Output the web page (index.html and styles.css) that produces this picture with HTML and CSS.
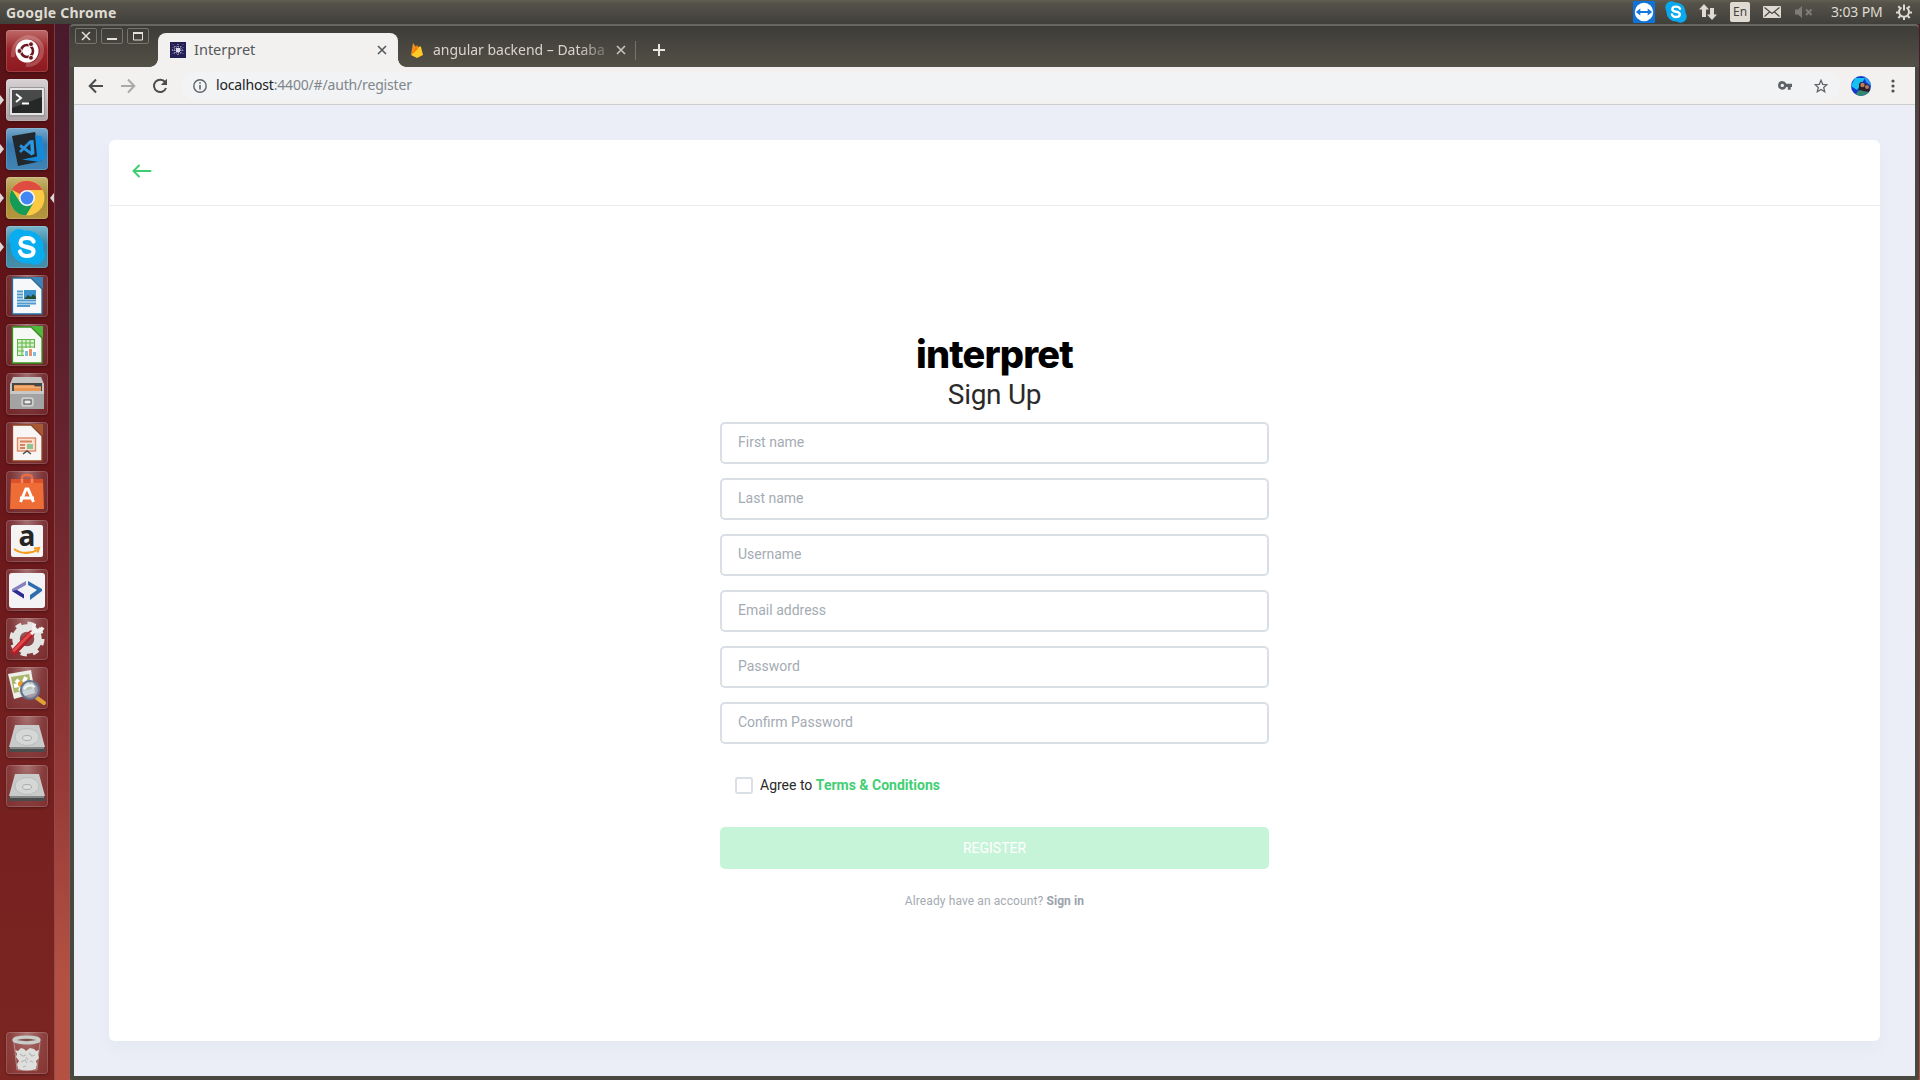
FILE: index.html
```html
<!DOCTYPE html>
<html lang="en">
<head>
<meta charset="utf-8">
<title>Interpret</title>
<link rel="stylesheet" href="styles.css">
</head>
<body>
<header class="panel">
  <span class="panel-title">Google Chrome</span>
  <div class="tray">
    <svg class="tray-tv" width="22" height="22" viewBox="0 0 22 22"><rect width="22" height="22" fill="#0f72d8"/><circle cx="11" cy="11" r="9.2" fill="#fff"/><path d="M2.800 11l4.500-3.500v2.500h7.400V7.500l4.500 3.500-4.500 3.500V12H7.300v2.500z" fill="#1478dc"/></svg>
    <svg class="tray-skype" width="22" height="22" viewBox="0 0 22 22"><circle cx="6.5" cy="6.5" r="6.2" fill="#08a9ee"/><circle cx="15.5" cy="15.5" r="6.2" fill="#08a9ee"/><circle cx="11" cy="11" r="9.5" fill="#08a9ee"/><path d="M15 7.800C14.300 6 12.700 5.600 11 5.600c-2 0-3.700.9-3.700 2.600 0 3.500 7.500 1.700 7.500 5 0 1.900-1.800 2.800-3.800 2.800-1.900 0-3.500-.8-4-2.500" fill="none" stroke="#fff" stroke-width="2.400" stroke-linecap="round"/></svg>
    <svg class="tray-net" width="18" height="18" viewBox="0 0 18 18" fill="#dfdbd2"><path d="M5 1l5 5.500H7V14H3V6.500H0zM13 17l-5-5.500h3V5h4v6.500h3z"/></svg>
    <span class="tray-lang">En</span>
    <svg class="tray-mail" width="18" height="12" viewBox="0 0 18 12"><rect width="18" height="12" rx="1" fill="#dfdbd2"/><path d="M1.500 1.500L9 7.500l7.500-6M1.500 10.500l5-4.500M16.500 10.500l-5-4.500" fill="none" stroke="#4a4842" stroke-width="1.200"/></svg>
    <svg class="tray-vol" width="18" height="12" viewBox="0 0 18 12"><path d="M0 3.500h3L7 0v12L3 8.500H0z" fill="#7f7c75"/><path d="M11 3.500l5.500 5.500M16.500 3.500L11 9" stroke="#7f7c75" stroke-width="2"/></svg>
    <span class="tray-clock">3:03 PM</span>
    <svg class="tray-gear" width="16" height="16" viewBox="0 0 16 16" fill="none" stroke="#dfdbd2"><path d="M10.500 3.500a5 5 0 1 1-5 0" stroke-width="2"/><path d="M8 .5v6" stroke-width="2"/><path d="M4 4L2.300 2.300M12 4l1.700-1.700M3 8.500H0M13 8.500h3M4.300 12l-2 2M11.700 12l2 2M8 13v3" stroke-width="2"/></svg>
  </div>
</header>
<div class="workspace">
  <nav class="launcher">
    <div class="tile ubuntu"><svg viewBox="0 0 42 42"><path d="M7 27C6 14 16 5 27 8c9 3 12 14 5 22M35 14c4 12-4 22-15 21" fill="none" stroke="#ffffff35" stroke-width="4"/><circle cx="21" cy="21" r="11.500" fill="#fff"/><circle cx="21" cy="21" r="6" fill="none" stroke="#6c1720" stroke-width="2.600"/><path d="M22 19l4-6.500M22 23l4 6.500M12 21h6" stroke="#fff" stroke-width="1.200"/><g fill="#6c1720" stroke="#fff" stroke-width=".8"><circle cx="13.500" cy="21" r="2.400"/><circle cx="25" cy="14.200" r="2.400"/><circle cx="25" cy="27.800" r="2.400"/></g></svg></div>
    <div class="tile terminal running"><svg viewBox="0 0 42 42"><rect x="3" y="8" width="36" height="30" rx="2" fill="#9a9898"/><rect x="4" y="9" width="34" height="27" rx="1" fill="#e4e2e2"/><rect x="6" y="11" width="30" height="23" fill="#252827"/><path d="M6 11h30v7L6 29z" fill="#474a49"/><path d="M10 15l5 4-5 4M16 24.500h7" fill="none" stroke="#fff" stroke-width="1.900"/></svg></div>
    <div class="tile vscode running"><svg viewBox="0 0 42 42"><path d="M6 8l23-4 7 29-24 5z" fill="#22272c"/><path d="M29 7l7 1.500 3 21.500-5 4-18-2.500 15-3z" fill="#168ad8"/><path d="M14 17.500L26 26M14 24l11-11" fill="none" stroke="#2a92dc" stroke-width="2.800"/><path d="M24 12.500l3.500-.5 1 14-3.500 1.500z" fill="#2e9ae4"/></svg></div>
    <div class="tile chrome running active"><svg viewBox="0 0 42 42"><circle cx="21" cy="21" r="17.500" fill="#fbca42"/><path d="M21 21L5.800 12.500A17.500 17.500 0 0 1 36.500 13H21z" fill="#df4c42"/><path d="M5.800 12.500L14 25l7 4-6 8.500A17.500 17.500 0 0 1 5.800 12.500z" fill="#149b57"/><path d="M21 29l7-4-8 13.500-5.500-1z" fill="#149b57"/><circle cx="21" cy="21" r="8" fill="#f5f5f5"/><circle cx="21" cy="21" r="6.400" fill="#4285f4"/></svg></div>
    <div class="tile skype running"><svg viewBox="0 0 42 42"><circle cx="13" cy="13" r="10" fill="#09adef"/><circle cx="29" cy="29" r="10" fill="#09adef"/><circle cx="21" cy="21" r="16.500" fill="#09adef"/><path d="M27.500 15.500C26.500 12.600 23.500 12 21 12c-3.500 0-6.500 1.500-6.500 4.400 0 6.500 13 3 13 9 0 3.200-3.200 4.600-6.500 4.600s-6-1.200-7-4.500" fill="none" stroke="#fff" stroke-width="4.200" stroke-linecap="round"/></svg></div>
    <div class="tile"><svg viewBox="0 0 42 42"><path d="M6.500 3H25l11 11v25H6.500z" fill="#f6f8f9" stroke="#246f9f" stroke-width="1.300"/><path d="M25 2h12v12z" fill="#3c83b7"/><path d="M11 16.500h6M11 19.500h6M11 22.500h6M11 25.500h19M11 28.500h19M11 31h13" stroke="#4f9bd0" stroke-width="1.800"/><rect x="18" y="15" width="12" height="9" fill="#3a93cc"/><path d="M18 24l4-4 3 2 2-3 3 3v2z" fill="#294d32"/></svg></div>
    <div class="tile"><svg viewBox="0 0 42 42"><path d="M6.500 3H25l11 11v25H6.500z" fill="#f6f8f6" stroke="#33951d" stroke-width="1.300"/><path d="M25 2h12v12z" fill="#50b83a"/><rect x="11.500" y="15.500" width="17" height="16" fill="#d8f1cb" stroke="#5fb646"/><path d="M12 19h17M12 23h17M12 27h17M16 16v15M20 16v15M24 16v15" stroke="#5fb646"/><rect x="18" y="24" width="13" height="8" fill="#fff"/><path d="M20.500 27v5M28.500 28v4" stroke="#7cbfe2" stroke-width="3"/><path d="M24.500 25v7" stroke="#ee9063" stroke-width="3"/></svg></div>
    <div class="tile"><svg viewBox="0 0 42 42"><path d="M7 4h28l3 7v25H4V11z" fill="#c4c4c2"/><path d="M6 10h30v9H6z" fill="#494846"/><path d="M8 12h20l1 2h6v5H8z" fill="#eb9652"/><path d="M8 14h27" stroke="#ffc58c"/><path d="M4 18h34v18H4z" fill="#a2a3a2"/><path d="M4 18h34v3H4z" fill="#c8c8c8"/><rect x="16" y="25" width="11" height="8" rx="1" fill="#bbb" stroke="#dedede"/><rect x="18" y="27" width="7" height="4" fill="#eee" stroke="#555"/></svg></div>
    <div class="tile"><svg viewBox="0 0 42 42"><path d="M6.500 3H25l11 11v25H6.500z" fill="#f8f6f5" stroke="#8e421f" stroke-width="1.300"/><path d="M25 2h12v12z" fill="#a75931"/><rect x="11.500" y="16" width="18" height="13" fill="#fae1d4" stroke="#e08a66" stroke-width="1.400"/><path d="M14 19.500h12M14 23h5M14 26h5" stroke="#cf8560" stroke-width="1.800"/><path d="M21 27v-5h6v5z" fill="#8cc592"/><path d="M17 32l4-3 4 3" fill="none" stroke="#4d4d4d" stroke-width="1.500"/></svg></div>
    <div class="tile"><svg viewBox="0 0 42 42"><path d="M16 12V7q0-3 5-3t5 3v5" fill="none" stroke="#ed6a43" stroke-width="2.500"/><path d="M5 8h32l1 30H4z" fill="#ee6c35"/><path d="M5 8h32v4H5z" fill="#dd512a"/><path d="M16 12V8M26 12V8" stroke="#f28a66" stroke-width="2.500"/><path d="M14.500 31L20 18h2l5.500 13M14 27h14" fill="none" stroke="#fff" stroke-width="3"/></svg></div>
    <div class="tile"><svg viewBox="0 0 42 42"><rect x="5" y="5" width="32" height="32" rx="2" fill="#f4f4f4"/><text x="21" y="26" text-anchor="middle" class="amazon-a">a</text><path d="M8 29c7 5 17 5 23 1M28 28.500l5-.5-1.500 4.500" fill="none" stroke="#f59b1c" stroke-width="2.100"/></svg></div>
    <div class="tile"><svg viewBox="0 0 42 42"><rect x="3" y="4" width="36" height="35" rx="3" fill="#f3f3f5"/><path d="M20 12v4l-9 5 7 4.500v4L6 22v-2z" fill="#8782bd"/><path d="M18 25.500v4L6 22l5-1z" fill="#2c2c94"/><path d="M22 12v4l9 5-7 5v5l12-9v-2z" fill="#2f6cad"/></svg></div>
    <div class="tile"><svg viewBox="0 0 42 42"><circle cx="21" cy="21" r="11" fill="none" stroke="#e4e4e3" stroke-width="7.500"/><circle cx="21" cy="21" r="15.500" fill="none" stroke="#e4e4e3" stroke-width="4" stroke-dasharray="6.090 6.090"/><path d="M8.500 33.500L25 16" stroke="#af202a" stroke-width="6.500" stroke-linecap="round"/><path d="M8 32.500L24 16" stroke="#e2494b" stroke-width="3" stroke-linecap="round"/><path d="M25 16l5-4M28.500 5.500q-2 7 2 7.500t6.500-3.500" fill="none" stroke="#f1f1ef" stroke-width="3.500"/></svg></div>
    <div class="tile"><svg viewBox="0 0 42 42"><path d="M2 7l23-4 4 23-21 6z" fill="#eeeeea"/><path d="M5 10l18-3 3 15-18 4z" fill="#a9b66b"/><path d="M10 13l10 9M20 10l-6 14M8 19l15-3" stroke="#fff" stroke-width="4"/><circle cx="15" cy="17" r="3" fill="#e99b20"/><path d="M31 31l7 5" stroke="#dfa036" stroke-width="4" stroke-linecap="round"/><circle cx="24" cy="23" r="9" fill="#b9c9d4aa" stroke="#64718f" stroke-width="2.200"/><path d="M18 22q5-6 11-2" stroke="#eef4f7" stroke-width="2" fill="none"/></svg></div>
    <div class="tile"><svg viewBox="0 0 42 42"><path d="M9 9h24l6 22H3z" fill="#c9caca"/><path d="M3 31h36v5H3z" fill="#4a4b4c"/><path d="M4 31h34v2H4z" fill="#858686"/><ellipse cx="21" cy="21" rx="12" ry="8.500" fill="#d5d6d6" stroke="#bbbcbc"/><ellipse cx="21" cy="22" rx="4.500" ry="2.500" fill="#dedede" stroke="#aaa"/></svg></div>
    <div class="tile"><svg viewBox="0 0 42 42"><path d="M9 9h24l6 22H3z" fill="#c9caca"/><path d="M3 31h36v5H3z" fill="#4a4b4c"/><path d="M4 31h34v2H4z" fill="#858686"/><ellipse cx="21" cy="21" rx="12" ry="8.500" fill="#d5d6d6" stroke="#bbbcbc"/><ellipse cx="21" cy="22" rx="4.500" ry="2.500" fill="#dedede" stroke="#aaa"/></svg></div>
    <div class="tile trash"><svg viewBox="0 0 42 42"><path d="M8 10l3 28h20l3-28z" fill="#a9656440" stroke="#c9a5a3" stroke-width=".7"/><path d="M9 18l3 1 3-3 3 1 2 2 4-3 4 1 2 2 3-1-1 5 1 3-3 3 1 3-1 5q-9 3-18 0l-1-5 2-3-3-4 1-3z" fill="#dededc"/><path d="M14 22l3 2 3-1M23 21l3 3 3-1M15 30l4-2 2 3M24 29l3 1M20 25l2 3M17 35l3-1" fill="none" stroke="#b9bab8" stroke-width="1.200"/><ellipse cx="20.500" cy="8" rx="12.500" ry="2.800" fill="#7f514d" stroke="#c9ccc9" stroke-width="3.300"/></svg></div>
  </nav>
  <main class="window">
    <div class="tabstrip">
      <div class="winbtns">
        <span class="winbtn"><svg width="20" height="14" viewBox="0 0 20 14"><path d="M6 3l8 8M14 3l-8 8" stroke="#e4e1d8" stroke-width="1.500"/></svg></span>
        <span class="winbtn"><svg width="20" height="14" viewBox="0 0 20 14"><path d="M5 10h10" stroke="#e4e1d8" stroke-width="2"/></svg></span>
        <span class="winbtn"><svg width="20" height="14" viewBox="0 0 20 14"><path d="M5.500 4h9v7h-9z" fill="none" stroke="#e4e1d8"/><path d="M5 4h10" stroke="#e4e1d8" stroke-width="2"/></svg></span>
      </div>
      <div class="tab tab-active">
        <svg width="16" height="16" viewBox="0 0 16 16"><rect width="16" height="16" fill="#221f57"/><g stroke="#fff" fill="none"><path d="M8 2v12M2 8h12" stroke-dasharray="1 1" opacity=".8"/><path d="M5 4v8M11 4v8M4 5h8M4 11h8" stroke-dasharray="1 1" opacity=".6"/><path d="M3 2v12M13 2v12" stroke-dasharray="1 2" opacity=".4"/></g><rect x="6" y="6" width="4" height="4" fill="#d8d7ef"/></svg>
        <span class="tab-title">Interpret</span>
        <svg class="tab-close" width="10" height="10" viewBox="0 0 10 10"><path d="M1 1l8 8M9 1L1 9" stroke="#55585b" stroke-width="1.600"/></svg>
      </div>
      <div class="tab tab-back">
        <svg width="14" height="16" viewBox="0 0 14 16"><path d="M1 13L3 1l3 4 1-2 2 3-8 7z" fill="#f4901d"/><path d="M1 13l9-9 1 1 2 8-6 3z" fill="#ffca28"/><path d="M1 13L6 5l2 2z" fill="#f57c00"/></svg>
        <span class="tab-title tab-title-fade">angular backend – Databa</span>
        <svg class="tab-close" width="10" height="10" viewBox="0 0 10 10"><path d="M1 1l8 8M9 1L1 9" stroke="#c7c4bd" stroke-width="1.600"/></svg>
      </div>
      <svg class="newtab" width="12" height="12" viewBox="0 0 12 12"><path d="M6 0v12M0 6h12" stroke="#e8e5dd" stroke-width="2"/></svg>
    </div>
    <div class="toolbar">
      <svg width="16" height="16" viewBox="0 0 16 16" fill="none" stroke="#4c4d4f" stroke-width="2"><path d="M15 8H2.500M8 1.500L1.700 8 8 14.500"/></svg>
      <svg width="16" height="16" viewBox="0 0 16 16" fill="none" stroke="#a9a9a8" stroke-width="2"><path d="M1 8h12.500M8 1.500L14.300 8 8 14.500"/></svg>
      <svg width="16" height="16" viewBox="0 0 16 16"><path d="M13.200 4.200A6.200 6.200 0 1 0 14 10" fill="none" stroke="#4c4d4f" stroke-width="2"/><path d="M15 .8V7H8.800z" fill="#4c4d4f"/></svg>
      <div class="omnibox">
        <svg width="14" height="14" viewBox="0 0 14 14"><circle cx="7" cy="7" r="6.200" fill="none" stroke="#5f6368" stroke-width="1.400"/><path d="M7 6v4.500M7 3.300v1.500" stroke="#5f6368" stroke-width="1.600"/></svg>
        <span class="url"><b>localhost</b>:4400/#/auth/register</span>
        <svg class="key" width="14" height="9" viewBox="0 0 14 9"><path fill-rule="evenodd" d="M4.300 0a4.300 4.300 0 0 1 4 2.800H14v3.200h-1.300v2.800H9.800V6H8.300A4.300 4.300 0 1 1 4.300 0zm0 2.700a1.700 1.700 0 1 0 0 3.400 1.700 1.700 0 0 0 0-3.400z" fill="#5f6368"/></svg>
        <svg class="star" width="14" height="14" viewBox="0 0 14 14"><path d="M7 1.300l1.700 4 4.200.4-3.200 2.800 1 4.200L7 10.500l-3.700 2.200 1-4.200L1.100 5.700l4.200-.4z" fill="none" stroke="#5f6368" stroke-width="1.300"/></svg>
      </div>
      <svg class="avatar" width="20" height="20" viewBox="0 0 20 20"><rect width="20" height="20" fill="#1238c8"/><path d="M0 10l4-8 10 0-3 5-5 7z" fill="#17c0f2"/><path d="M13 0l7 4v6l-5-4z" fill="#2e9bf1"/><path d="M8 17V8q2-4 6 0l4 1 1 7z" fill="#2b1c22"/><circle cx="11.500" cy="9" r="2.200" fill="#bc7c62"/><circle cx="16" cy="11" r="2" fill="#b8765d"/><path d="M4 20q3-8 8-5l6 1v4z" fill="#358575"/></svg>
      <svg class="dots" width="4" height="14" viewBox="0 0 4 14" fill="#505154"><circle cx="2" cy="2" r="1.600"/><circle cx="2" cy="7" r="1.600"/><circle cx="2" cy="12" r="1.600"/></svg>
    </div>
    <div class="page">
      <section class="card">
        <div class="card-head"><svg width="20" height="14" viewBox="0 0 20 14" fill="none" stroke="#3bcf70" stroke-width="2" stroke-linecap="round" stroke-linejoin="round"><path d="M18.500 7H2M7 1.500L1.500 7 7 12.500"/></svg></div>
        <form class="form">
          <div class="logo"><span>interpret</span></div>
          <h1 class="heading">Sign Up</h1>
          <input class="field" type="text" placeholder="First name">
          <input class="field" type="text" placeholder="Last name">
          <input class="field" type="text" placeholder="Username">
          <input class="field" type="text" placeholder="Email address">
          <input class="field" type="text" placeholder="Password">
          <input class="field" type="text" placeholder="Confirm Password">
          <label class="agree"><span class="box"></span><span>Agree to <strong>Terms &amp; Conditions</strong></span></label>
          <button class="register" type="button">REGISTER</button>
          <p class="signin">Already have an account? <b>Sign in</b></p>
        </form>
      </section>
    </div>
  </main>
</div>
</body>
</html>
```
FILE: styles.css
```css
* { box-sizing: border-box; }
body {
  margin: 0;
  width: 1920px;
  height: 1080px;
  overflow: hidden;
  display: flex;
  flex-direction: column;
  font-family: "Noto Sans", "Open Sans", sans-serif;
  background: #2c001e;
}
svg { display: block; flex: none; }

/* top panel */
.panel {
  height: 24px;
  flex: none;
  display: flex;
  align-items: center;
  justify-content: space-between;
  padding: 0 8px 0 6px;
  background: linear-gradient(#605d51, #55524a 15%, #403f3a);
  color: #dfdbd2;
}
.panel-title { font-size: 14px; font-weight: 700; line-height: 23px; letter-spacing: .23px; }
.tray { display: flex; align-items: center; height: 24px; }
.tray-skype { margin-left: 10px; }
.tray-net { margin-left: 12px; }
.tray-lang {
  margin-left: 13px;
  width: 20px;
  height: 20px;
  border-radius: 2px;
  background: #dfdbd2;
  color: #45433e;
  font-size: 12px;
  line-height: 20px;
  text-align: center;
}
.tray-mail { margin-left: 13px; }
.tray-vol { margin-left: 14px; }
.tray-clock {
  margin-left: 18px;
  padding-bottom: 1px;
  width: 53px;
  font-size: 14px;
  letter-spacing: -.15px;
  white-space: nowrap;
}
.tray-gear { margin-left: 12px; }

.workspace {
  flex: 1;
  min-height: 0;
  display: flex;
  gap: 15px;
  padding-right: 1px;
  background: linear-gradient(#481a2c, #5a202e 30%, #73292f 50%, #963a38 72%, #b35042 90%, #b55143);
}

/* launcher */
.launcher {
  width: 55px;
  flex: none;
  display: flex;
  flex-direction: column;
  gap: 7px;
  padding: 6px 0 6px 6px;
  border-right: 1px solid #ffffff30;
  background: linear-gradient(#581216, #68161a 40%, #752020 70%, #7c2622);
}
.tile {
  position: relative;
  width: 42px;
  height: 42px;
  flex: none;
  border-radius: 4px;
  background: radial-gradient(ellipse at 50% 0, #ffffff60, #ffffff22 55%, #ffffff10);
  box-shadow: inset 0 0 0 1px #ffffff28, 0 1px 3px #00000050;
}
.tile svg { width: 42px; height: 42px; }
.ubuntu { background: linear-gradient(#bd6b69, #9d2529 45%, #8c1a20); }
.terminal { background: linear-gradient(#d7d1d3, #aaa1a4); }
.vscode { background: linear-gradient(#79a9ca, #3578ad 40%, #4083b3); }
.chrome { background: linear-gradient(#c7b673, #a78c37 45%, #b5973f); }
.skype { background: linear-gradient(#79b8cd, #3888a8 45%, #478da8); }
.trash { margin-top: auto; }
.running::before, .active::after {
  content: "";
  position: absolute;
  top: 16px;
  border: 5px solid transparent;
}
.running::before { left: -6px; border-left: 4px solid #ddd8d8; border-right: 0; }
.active::after { right: -6px; border-right: 4px solid #ddd8d8; border-left: 0; }
.amazon-a { font: 700 28px "Open Sans", sans-serif; fill: #252525; }

/* browser window */
.window {
  flex: 1;
  min-width: 0;
  display: flex;
  flex-direction: column;
  border: solid #484740;
  border-width: 0 4px 4px;
  border-radius: 4px 4px 2px 2px;
  box-shadow: -1px 0 #77747066;
  background: #484740;
}
.tabstrip {
  height: 43px;
  flex: none;
  margin: 0 -4px;
  padding: 0 5px;
  display: flex;
  border-top: 2px solid #696761;
  border-radius: 4px 4px 0 0;
  background: linear-gradient(#3d3c37, #535047);
}
.winbtns { display: flex; gap: 4px; padding-top: 2px; }
.winbtn {
  width: 22px;
  height: 16px;
  border: 1px solid #77746c;
  border-radius: 2px;
}
.tab { display: flex; align-items: center; height: 34px; margin-top: 7px; }
.tab-active {
  position: relative;
  width: 240px;
  margin-left: 9px;
  padding: 0 11px 0 12px;
  border-radius: 8px 8px 0 0;
  background: #f2f1f0;
}
.tab-active::before, .tab-active::after {
  content: "";
  position: absolute;
  bottom: 0;
  width: 8px;
  height: 8px;
}
.tab-active::before { left: -8px; background: radial-gradient(circle at 0 0, transparent 7.5px, #f2f1f0 8px); }
.tab-active::after { right: -8px; background: radial-gradient(circle at 100% 0, transparent 7.5px, #f2f1f0 8px); }
.tab-title { margin-left: 8px; padding-bottom: 2px; font-size: 14.500px; color: #55585b; white-space: nowrap; }
.tab-close { margin-left: auto; }
.tab-back { width: 238px; padding: 0 10px 0 12px; position: relative; }
.tab-back::after { content: ""; position: absolute; right: 0; top: 8px; width: 1px; height: 19px; background: #77746c; }
.tab-title-fade {
  width: 176px;
  margin-left: 9px;
  font-size: 14px;
  letter-spacing: -.02px;
  color: #d9d5cc;
  -webkit-mask-image: linear-gradient(90deg, #000 145px, #0003 176px);
  mask-image: linear-gradient(90deg, #000 145px, #0003 176px);
}
.newtab { margin: 18px 0 0 17px; }

.toolbar {
  height: 38px;
  flex: none;
  display: flex;
  align-items: center;
  gap: 16px;
  padding: 0 20px 0 14px;
  border-bottom: 1px solid #cfcecb;
  background: #f2f1ef;
}
.omnibox {
  flex: 1;
  height: 28px;
  margin-left: -3px;
  display: flex;
  align-items: center;
  padding: 0 12px;
  border-radius: 14px;
  background: #f1f3f4;
}
.url { margin-left: 9px; padding-bottom: 2px; font-size: 14px; letter-spacing: -.17px; color: #80868b; white-space: nowrap; }
.url b { font-weight: 400; color: #202124; }
.key { margin-left: auto; }
.star { margin-left: 22px; }
.avatar { border-radius: 50%; margin-left: -5px; }
.dots { margin-left: 4px; }

/* page */
.page { flex: 1; min-height: 0; padding: 35px; background: #ebeef6; }
.card {
  height: 901px;
  width: 1771px;
  display: flex;
  flex-direction: column;
  border-radius: 6px;
  background: #fff;
  box-shadow: 0 8px 16px #2c335508;
  font-family: Roboto, sans-serif;
}
.card-head { height: 66px; flex: none; padding: 24px 23px; border-bottom: 1px solid #e9ebf0; }
.form { width: 549px; margin: 0 auto; padding-top: 131px; display: flex; flex-direction: column; }
.logo { height: 44px; display: flex; justify-content: center; }
.logo span { font: 800 38px/34px Inter, sans-serif; letter-spacing: -.85px; color: #000; }
.heading {
  margin: 0 0 9px;
  height: 32px;
  text-align: center;
  font: 400 28px/28px Roboto, sans-serif;
  letter-spacing: -.3px;
  color: #2a2a2a;
}
.field {
  height: 42px;
  margin: 0 0 14px;
  padding: 0 16px 2px;
  border: 2px solid #dadfe6;
  border-radius: 5px;
  background: #fff;
  font: 14px Roboto, sans-serif;
}
.field::placeholder { color: #a4abb3; opacity: 1; }
.agree { display: flex; align-items: center; height: 22px; margin: 16px 0 0 15px; font-size: 14px; color: #2a2a2a; }
.box { width: 18px; height: 17px; margin-right: 7px; border: 2px solid #dadfe6; border-radius: 3px; }
.agree strong { color: #42cf74; font-weight: 700; }
.register {
  height: 42px;
  margin: 31px 0 0;
  padding: 0 0 1px;
  border: 0;
  border-radius: 5px;
  background: #c6f4d9;
  color: #fff;
  font: 400 14px Roboto, sans-serif;
}
.signin { margin: 24px 0 0; text-align: center; font-size: 12px; letter-spacing: .1px; line-height: 16px; color: #a4abb3; }
.signin b { color: #9aa2ad; }
```
